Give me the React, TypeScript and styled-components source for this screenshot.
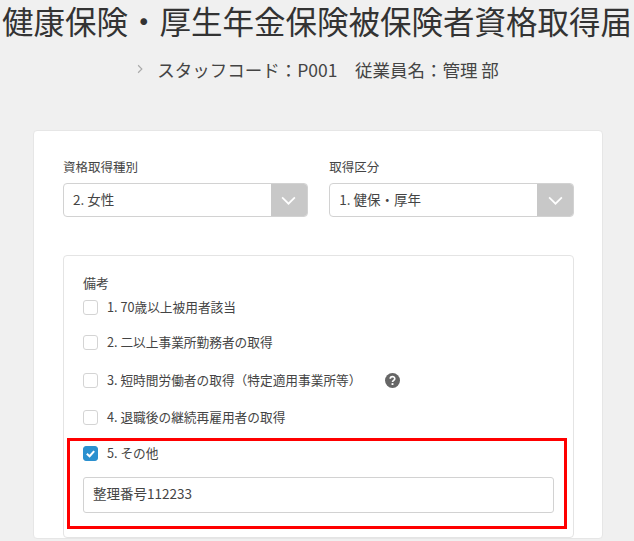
import styled, { createGlobalStyle } from 'styled-components';

const GlobalStyle = createGlobalStyle`
  html, body {
    margin: 0;
    height: 541px;
    overflow: hidden;
    background: #f0f0f0;
    color: #333;
    font-family: "Noto Sans CJK JP", "Noto Sans", sans-serif;
  }
`;

const Page = styled.div`
  width: 634px;
`;

const Title = styled.h1`
  margin: 0;
  font-size: 31.5px;
  line-height: 40px;
  font-weight: 400;
  text-align: center;
  white-space: nowrap;
`;

const SubTitle = styled.div`
  display: flex;
  justify-content: center;
  align-items: center;
  gap: 12px;
  margin-top: 15px;
  height: 28px;
  font-size: 17.5px;
  color: #444;
`;

const Card = styled.div`
  box-sizing: border-box;
  width: 570px;
  margin: 47px 0 0 33px;
  padding: 27px 28px 0 29px;
  background: #fff;
  border: 1px solid #e6e6e6;
  border-radius: 4px;
`;

const SelectRow = styled.div`
  display: flex;
  gap: 21.5px;
`;

const Field = styled.div`
  flex: 1;
`;

const Label = styled.div`
  font-size: 12.5px;
  line-height: 18px;
  margin-bottom: 7px;
  color: #444;
`;

const Select = styled.div`
  display: flex;
  justify-content: space-between;
  height: 34px;
  box-sizing: border-box;
  border: 1px solid #d2d2d2;
  border-radius: 4px;
  overflow: hidden;
`;

const SelectValue = styled.span`
  padding-left: 9px;
  font-size: 13.5px;
  line-height: 30px;
  color: #444;
`;

const SelectArrow = styled.span`
  display: flex;
  align-items: center;
  justify-content: center;
  width: 36px;
  background: #c8c8c8;
`;

const NoteBox = styled.div`
  position: relative;
  box-sizing: border-box;
  height: 283px;
  margin-top: 38px;
  padding: 17px 19px 0;
  border: 1px solid #e4e4e4;
  border-radius: 4px;
`;

const NoteTitle = styled.div`
  font-size: 13px;
  line-height: 20px;
  color: #444;
`;

const CheckRow = styled.div<{ $gap: number }>`
  display: flex;
  align-items: center;
  gap: 9px;
  height: 28px;
  margin-top: ${(p) => p.$gap}px;
  font-size: 12.7px;
  color: #444;
`;

const CheckText = styled.span`
  padding-bottom: 2px;
`;

const Check = styled.span<{ $checked?: boolean }>`
  display: flex;
  align-items: center;
  justify-content: center;
  box-sizing: border-box;
  width: 15px;
  height: 15px;
  border-radius: 3px;
  border: 1px solid ${(p) => (p.$checked ? '#2b90cf' : '#d4d4d4')};
  background: ${(p) => (p.$checked ? '#2b90cf' : '#fff')};
`;

const HelpIcon = styled.svg`
  margin-left: 15px;
  margin-top: 1px;
`;

const TextInput = styled.div`
  box-sizing: border-box;
  height: 36px;
  margin-top: 10px;
  padding-left: 9px;
  border: 1px solid #d2d2d2;
  border-radius: 3px;
  font-size: 13.5px;
  line-height: 31px;
  color: #444;
`;

const Highlight = styled.div`
  position: absolute;
  left: 3px;
  top: 182px;
  box-sizing: border-box;
  width: 500px;
  height: 91px;
  border: 3px solid #f00;
`;

const ChevronDown = () => (
  <svg width="17" height="17" viewBox="0 0 16 16" fill="none">
    <path d="M2 5 L8 11 L14 5" stroke="#fff" strokeWidth="1.6" />
  </svg>
);

const ChevronRight = () => (
  <svg width="10" height="10" viewBox="0 0 16 16" fill="none">
    <path d="M5 2 L11 8 L5 14" stroke="#aaa" strokeWidth="1.8" />
  </svg>
);

const items = [
  { text: '1. 70歳以上被用者該当', gap: 0 },
  { text: '2. 二以上事業所勤務者の取得', gap: 7 },
  { text: '3. 短時間労働者の取得（特定適用事業所等）', gap: 10, help: true },
  { text: '4. 退職後の継続再雇用者の取得', gap: 9 },
];

export default function App() {
  return (
    <Page>
      <GlobalStyle />
      <Title>健康保険・厚生年金保険被保険者資格取得届</Title>
      <SubTitle>
        <ChevronRight />
        <span>スタッフコード：P001　従業員名：管理 部</span>
      </SubTitle>
      <Card>
        <SelectRow>
          <Field>
            <Label>資格取得種別</Label>
            <Select>
              <SelectValue>2. 女性</SelectValue>
              <SelectArrow>
                <ChevronDown />
              </SelectArrow>
            </Select>
          </Field>
          <Field>
            <Label>取得区分</Label>
            <Select>
              <SelectValue>1. 健保・厚年</SelectValue>
              <SelectArrow>
                <ChevronDown />
              </SelectArrow>
            </Select>
          </Field>
        </SelectRow>
        <NoteBox>
          <NoteTitle>備考</NoteTitle>
          {items.map((item) => (
            <CheckRow key={item.text} $gap={item.gap}>
              <Check />
              <CheckText>{item.text}</CheckText>
              {item.help && (
                <HelpIcon width="15" height="15" viewBox="0 0 16 16">
                  <circle cx="8" cy="8" r="8" fill="#666" />
                  <path d="M5.6 6.2 C5.6 3.2 10.4 3.2 10.4 6 C10.4 7.8 8 7.8 8 9.6" fill="none" stroke="#fff" strokeWidth="1.8" />
                  <rect x="7" y="10.8" width="2" height="2" fill="#fff" />
                </HelpIcon>
              )}
            </CheckRow>
          ))}
          <CheckRow $gap={8}>
            <Check $checked>
              <svg width="11" height="11" viewBox="0 0 12 12" fill="none">
                <path d="M2 6.2 L5 9 L10 3.4" stroke="#fff" strokeWidth="2.2" />
              </svg>
            </Check>
            <CheckText>5. その他</CheckText>
          </CheckRow>
          <TextInput>整理番号112233</TextInput>
          <Highlight />
        </NoteBox>
      </Card>
    </Page>
  );
}
